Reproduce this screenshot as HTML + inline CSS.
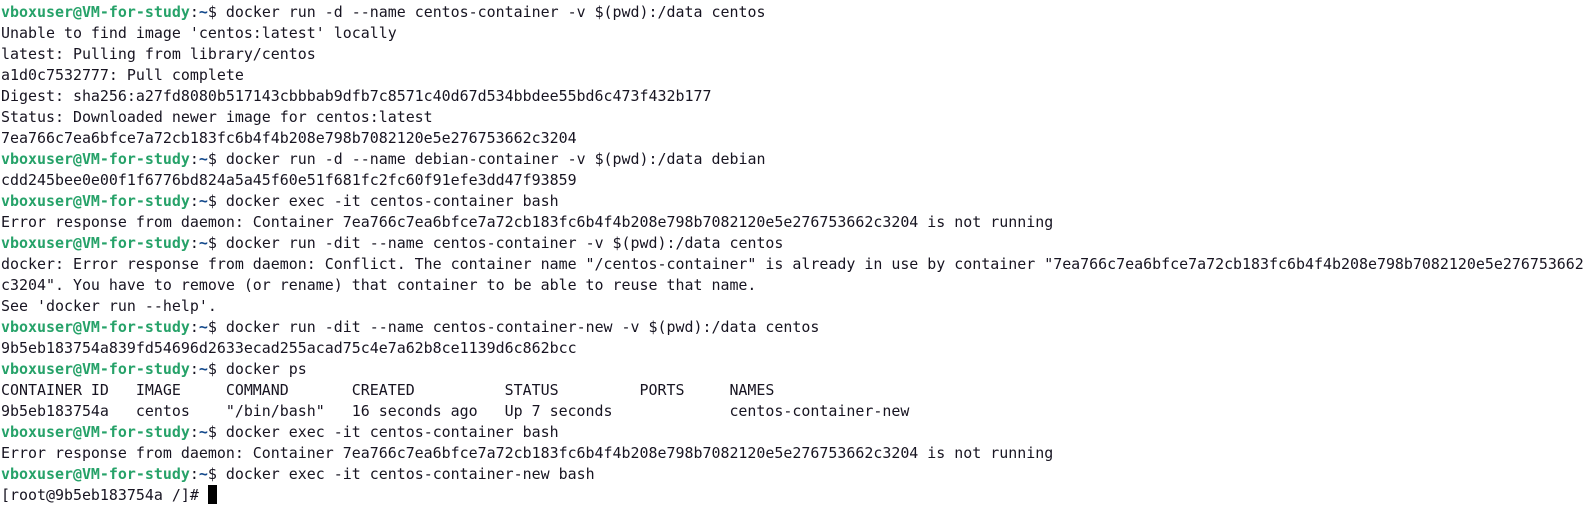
<!DOCTYPE html>
<html><head><meta charset="utf-8"><style>
html,body{margin:0;padding:0;background:#fff;width:1588px;height:521px;overflow:hidden}
pre{margin:0;position:absolute;left:1px;top:2px;font-family:"DejaVu Sans Mono","Liberation Mono",monospace;font-size:14.95px;line-height:20.98px;color:#171421;white-space:pre}
.g{color:#26a269;font-weight:bold}.b{color:#12488b;font-weight:bold}
.cur{display:inline-block;width:9px;height:19px;background:#000;vertical-align:-4px}
</style></head><body><pre><span class="g">vboxuser@VM-for-study</span>:<span class="b">~</span>$ docker run -d --name centos-container -v $(pwd):/data centos
Unable to find image 'centos:latest' locally
latest: Pulling from library/centos
a1d0c7532777: Pull complete
Digest: sha256:a27fd8080b517143cbbbab9dfb7c8571c40d67d534bbdee55bd6c473f432b177
Status: Downloaded newer image for centos:latest
7ea766c7ea6bfce7a72cb183fc6b4f4b208e798b7082120e5e276753662c3204
<span class="g">vboxuser@VM-for-study</span>:<span class="b">~</span>$ docker run -d --name debian-container -v $(pwd):/data debian
cdd245bee0e00f1f6776bd824a5a45f60e51f681fc2fc60f91efe3dd47f93859
<span class="g">vboxuser@VM-for-study</span>:<span class="b">~</span>$ docker exec -it centos-container bash
Error response from daemon: Container 7ea766c7ea6bfce7a72cb183fc6b4f4b208e798b7082120e5e276753662c3204 is not running
<span class="g">vboxuser@VM-for-study</span>:<span class="b">~</span>$ docker run -dit --name centos-container -v $(pwd):/data centos
docker: Error response from daemon: Conflict. The container name "/centos-container" is already in use by container "7ea766c7ea6bfce7a72cb183fc6b4f4b208e798b7082120e5e276753662
c3204". You have to remove (or rename) that container to be able to reuse that name.
See 'docker run --help'.
<span class="g">vboxuser@VM-for-study</span>:<span class="b">~</span>$ docker run -dit --name centos-container-new -v $(pwd):/data centos
9b5eb183754a839fd54696d2633ecad255acad75c4e7a62b8ce1139d6c862bcc
<span class="g">vboxuser@VM-for-study</span>:<span class="b">~</span>$ docker ps
CONTAINER ID   IMAGE     COMMAND       CREATED          STATUS         PORTS     NAMES
9b5eb183754a   centos    "/bin/bash"   16 seconds ago   Up 7 seconds             centos-container-new
<span class="g">vboxuser@VM-for-study</span>:<span class="b">~</span>$ docker exec -it centos-container bash
Error response from daemon: Container 7ea766c7ea6bfce7a72cb183fc6b4f4b208e798b7082120e5e276753662c3204 is not running
<span class="g">vboxuser@VM-for-study</span>:<span class="b">~</span>$ docker exec -it centos-container-new bash
[root@9b5eb183754a /]# <span class="cur"></span></pre></body></html>
